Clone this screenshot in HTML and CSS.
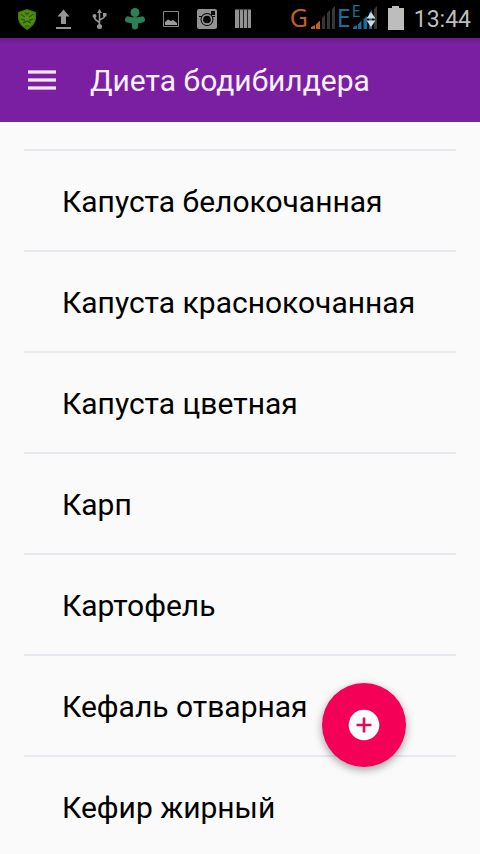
FILE: index.html
```html
<!DOCTYPE html>
<html lang="ru">
<head>
<meta charset="utf-8">
<meta name="viewport" content="width=device-width, initial-scale=1">
<title>Диета бодибилдера</title>
<link rel="stylesheet" href="styles.css">
</head>
<body>
<div class="app">
  <div class="status">
    <div class="notifications">
      <svg viewBox="9 0 36 38" aria-hidden="true">
        <path d="M27 9l9 3v6c0 5-4 9-9 12-5-3-9-7-9-12v-6z" fill="#417a0d"/>
        <path d="M27 10.500l7.500 2.500v5c0 4-3 7.500-7.500 10-4.500-2.500-7.500-6-7.500-10v-5z" fill="#558f10"/>
        <path d="M20.500 14l4.500 3M33.500 14L29 17M21 19l4 1.500M33 19l-4 1.500M23 23l4-2 4 2M25 26h4M25 12.500l2 2 2-2" fill="none" stroke="#2c5a0c" stroke-width="1.500"/>
      </svg>
      <svg viewBox="45 0 36 38" aria-hidden="true">
        <path d="M63.500 9.500l6 7H66v7.500h-5v-7.500h-3.500zM56 27h15v2H56z" fill="#969696"/>
      </svg>
      <svg viewBox="81 0 36 38" aria-hidden="true">
        <path d="M99.500 27V12M99.500 23.500c0-3-5-2-5-6.500M99.500 21c0-3 5-1.500 5-5" fill="none" stroke="#969696" stroke-width="1.500"/>
        <path d="M99.500 9l2.500 4h-5zM103 13h3.500v3.500H103z" fill="#969696"/>
        <circle cx="94.500" cy="16" r="2" fill="#969696"/><circle cx="99.500" cy="26.500" r="2.500" fill="#969696"/>
      </svg>
      <svg viewBox="117 0 36 38" aria-hidden="true">
        <g fill="#2a8058"><circle cx="135" cy="12.500" r="4.500"/><rect x="132" y="17" width="6" height="12.500" rx="3"/></g>
        <path d="M128 19.500c3 1.500 11 1.500 14 0" fill="none" stroke="#2a8058" stroke-width="6" stroke-linecap="round"/>
      </svg>
      <svg viewBox="153 0 36 38" aria-hidden="true">
        <path d="M163.500 11.500h15v15h-15z" fill="none" stroke="#858585"/>
        <path d="M165 25v-3l3-2.500 3 1.500 2-1 4 3v2z" fill="#9a9a9a"/>
      </svg>
      <svg viewBox="189 0 36 38" aria-hidden="true">
        <rect x="197" y="9" width="20" height="20" rx="2" fill="#929292"/>
        <path d="M199 16.500h3M212 16.500h3" stroke="#000"/>
        <circle cx="207" cy="19.500" r="6.500" fill="#000"/><circle cx="207" cy="19.500" r="5.500" fill="#929292"/><circle cx="207" cy="19.500" r="3.800" fill="#000"/>
        <path d="M211 11h4v4h-4z" fill="#000"/>
      </svg>
      <svg viewBox="225 0 36 38" aria-hidden="true">
        <path d="M235 9.500h16V28h-16z" fill="#929292"/>
        <path d="M239.500 9.500V28M243.500 9.500V28M247.500 9.500V28" stroke="#222"/>
      </svg>
    </div>
    <div class="system">
      <span class="net net-g">G</span>
      <svg class="signal" viewBox="311 0 25 38" aria-hidden="true">
        <path d="M311 29v-2l4-2v4zM316 29v-4.500l4-4V29z" fill="#c55f1f"/>
        <path d="M322 29V18l3-3v14zM327 29V13l3-3v19zM332 29V9l3-3v23z" fill="#363636"/>
      </svg>
      <span class="net net-e">E</span>
      <div class="data">
        <span class="data-type">E</span>
        <svg class="signal" viewBox="353 0 25 38" aria-hidden="true">
          <path d="M353 29v-2l4-2v4zM358 29v-4.500l3.500-4V29zM363.500 29V19l3.500-3v13zM369 29V13l3-3v19z" fill="#176f9e"/>
          <path d="M374 29V9l3-3v23z" fill="#363636"/>
          <path d="M371 12l4.500 6.500h-9zM371 27l4.500-6.500h-9z" fill="#d4d8d8"/>
        </svg>
      </div>
      <svg class="battery" viewBox="388 0 16 38" aria-hidden="true">
        <path d="M388 8h4V6h7v2h5v22h-16z" fill="#bdbdbd"/>
      </svg>
      <time class="clock">13:44</time>
    </div>
  </div>
  <header class="bar">
    <button class="menu" type="button" aria-label="Меню">
      <svg viewBox="0 0 28 22" aria-hidden="true"><path d="M0 1h28v4H0zM0 9h28v4H0zM0 17h28v4H0z" fill="#c99edb"/><path d="M0 2h28v2H0zM0 10h28v2H0zM0 18h28v2H0z" fill="#f6e8fb"/></svg>
    </button>
    <h1 class="title">Диета бодибилдера</h1>
  </header>
  <main class="content">
    <ul class="list">
      <li class="row">Капуста белокочанная</li>
      <li class="row">Капуста краснокочанная</li>
      <li class="row">Капуста цветная</li>
      <li class="row">Карп</li>
      <li class="row">Картофель</li>
      <li class="row">Кефаль отварная</li>
      <li class="row">Кефир жирный</li>
    </ul>
  </main>
  <button class="fab" type="button" aria-label="Добавить">
    <svg viewBox="0 0 32 32" aria-hidden="true"><circle cx="16" cy="16" r="15.300" fill="#fff"/><path d="M16 8.500v15M8.500 16h15" stroke="#e30a58" stroke-width="2.600"/></svg>
  </button>
</div>
</body>
</html>
```
FILE: styles.css
```css
* {
  box-sizing: border-box;
}

body {
  margin: 0;
  background: #fafafa;
  color: #000;
  font-family: Roboto, "Noto Sans", sans-serif;
}

.app {
  position: relative;
  display: flex;
  flex-direction: column;
  height: 100vh;
  overflow: hidden;
}

.status {
  display: flex;
  flex: none;
  justify-content: space-between;
  height: 38px;
  padding: 0 9px;
  background: #000;
}

.notifications,
.system {
  display: flex;
  align-items: flex-start;
}

.notifications svg {
  width: 36px;
  height: 38px;
}

.net {
  font: 25px/35px "Noto Sans", sans-serif;
}

.net-g {
  width: 21px;
  color: #c55f1f;
}

.net-e {
  width: 17px;
  padding-left: 1px;
  color: #176f9e;
}

.signal {
  display: block;
  width: 25px;
  height: 38px;
}

.data {
  position: relative;
}

.data-type {
  position: absolute;
  top: 2px;
  left: -1px;
  color: #176f9e;
  font: 16px/18px "Noto Sans", sans-serif;
}

.battery {
  width: 16px;
  height: 38px;
  margin: 0 10px;
}

.clock {
  color: #bdbdbd;
  font-size: 23px;
  line-height: 39px;
}

.bar {
  display: flex;
  flex: none;
  align-items: center;
  gap: 34px;
  height: 84px;
  padding: 0 28px;
  background: linear-gradient(#6a1a8c, #7b1fa2 6px);
}

.menu {
  width: 28px;
  height: 22px;
  padding: 0;
  border: 0;
  background: none;
}

.menu svg {
  display: block;
}

.title {
  margin: 0;
  padding-top: 2px;
  color: #fbf0ff;
  font-size: 30px;
  font-weight: 400;
  line-height: 36px;
}

.content {
  flex: 1;
  min-height: 0;
  padding: 27px 24px 0;
}

.list {
  margin: 0;
  padding: 0;
  list-style: none;
}

.row {
  padding: 33px 38px 30px;
  border-top: 2px solid #e8e8f0;
  font-size: 30px;
  line-height: 36px;
}

.fab {
  position: absolute;
  right: 74px;
  bottom: 87px;
  display: grid;
  place-items: center;
  width: 84px;
  height: 84px;
  padding: 0;
  border: 0;
  border-radius: 50%;
  background: #f50057;
  box-shadow: 0 3px 8px rgba(0, 0, 0, 0.36);
}

.fab svg {
  width: 32px;
  height: 32px;
}
```
